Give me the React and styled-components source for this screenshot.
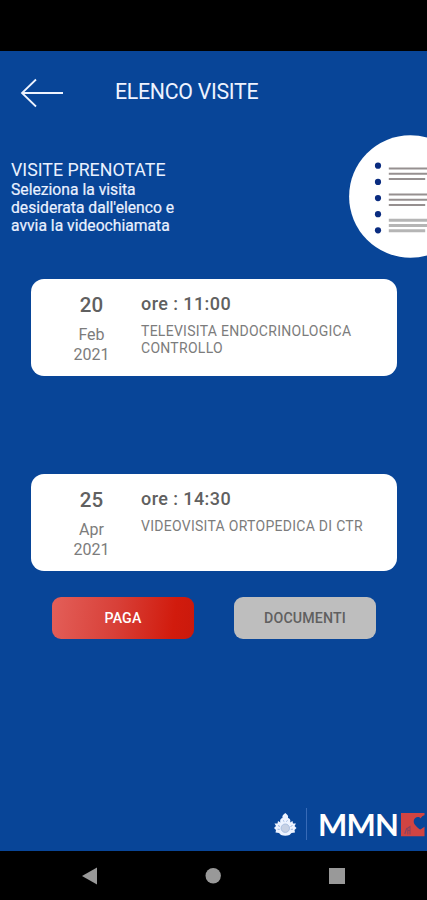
import React from "react";
import styled, { createGlobalStyle } from "styled-components";

const GlobalStyle = createGlobalStyle`
  * { box-sizing: border-box; }
  body { margin: 0; background: #000; font-family: Roboto, "Liberation Sans", sans-serif; }
  h1, h2, p { margin: 0; font-weight: 400; }
  button { font-family: inherit; border: 0; padding: 0; }
  svg { display: block; flex: none; }
`;

const Screen = styled.div`
  width: 427px;
  height: 900px;
  display: flex;
  flex-direction: column;
  overflow: hidden;
  background: #000;
`;

const StatusBar = styled.div`
  height: 51px;
  flex: none;
`;

const Content = styled.main`
  height: 800px;
  flex: none;
  display: flex;
  flex-direction: column;
  background: #084598;
  overflow: hidden;
`;

const Header = styled.header`
  height: 80px;
  flex: none;
  display: flex;
  align-items: center;
  padding-left: 20px;
`;

const BackButton = styled.button`
  width: 44px;
  height: 32px;
  margin: 4px 51px 0 0;
  background: none;
`;

const Title = styled.h1`
  padding-top: 1px;
  font-size: 21.3px;
  line-height: 26px;
  letter-spacing: -0.28px;
  color: #eef3ff;
`;

const Intro = styled.section`
  height: 148px;
  flex: none;
  display: flex;
  justify-content: space-between;
  padding: 4px 0 0 11px;
`;

const IntroText = styled.div`
  padding-top: 25px;
  color: #eaf1ff;
`;

const IntroTitle = styled.h2`
  font-size: 17.8px;
  line-height: 20.6px;
  white-space: nowrap;
`;

const IntroLine = styled.p`
  font-size: 15.7px;
  line-height: 18.3px;
  white-space: nowrap;
  -webkit-text-stroke: 0.2px #eaf1ff;
`;

const VisitCard = styled.article`
  width: 366px;
  height: 97px;
  flex: none;
  display: flex;
  margin: 0 0 ${(p) => p.$gap}px 31px;
  background: #fff;
  border-radius: 13px;
  color: #7c7c7c;
`;

const DateColumn = styled.div`
  width: 121px;
  padding-top: 13px;
  text-align: center;
`;

const Day = styled.p`
  font-size: 20.5px;
  font-weight: 500;
  line-height: 26px;
  color: #606060;
`;

const DatePart = styled.p`
  font-size: 16px;
  line-height: 19.5px;
  margin-top: ${(p) => p.$top || 0}px;
`;

const Details = styled.div`
  padding-top: 13px;
  margin-left: -11px;
`;

const Time = styled.p`
  font-size: 18px;
  font-weight: 500;
  line-height: 24px;
  letter-spacing: 0.42px;
  color: #606060;
`;

const VisitName = styled.p`
  margin-top: 7px;
  font-size: 14px;
  line-height: 17px;
  letter-spacing: 0.28px;
  white-space: nowrap;
`;

const Actions = styled.div`
  display: flex;
  gap: 40px;
  padding-left: 52px;
  flex: none;
`;

const ActionButton = styled.button`
  width: 142px;
  height: 42px;
  border-radius: 9px;
  font-size: 14.2px;
  font-weight: 500;
  line-height: 42px;
  letter-spacing: 0.15px;
  color: ${(p) => (p.$primary ? "#fff" : "#606060")};
  background: ${(p) => (p.$primary ? "linear-gradient(97deg, #e35f59 0%, #d84038 45%, #d11b0d 85%, #ca190c 100%)" : "#bebebe")};
`;

const Branding = styled.footer`
  margin-top: auto;
  height: 52px;
  flex: none;
  display: flex;
  align-items: flex-start;
  padding-left: 273px;
`;

const LogoSlot = styled.div`
  padding-top: 14px;
`;

const Divider = styled.div`
  width: 1px;
  height: 32px;
  margin: 9px 11px 0 9px;
  background: #376ab7;
`;

const Wordmark = styled.div`
  width: 82px;
  padding-top: 7px;
  font: 700 31px/36px Lato, "Open Sans", sans-serif;
  letter-spacing: -0.8px;
  color: #fff;
`;

const NavBar = styled.nav`
  flex: 1;
  display: flex;
  align-items: center;
  justify-content: space-between;
  padding: 0 82px;
`;

const BackArrow = () => (
  <svg width="44" height="32" viewBox="0 0 44 32" fill="none" stroke="#eef3ff" strokeWidth="1.8">
    <path d="M43 16H2M16 2.5 2 16l14 13.5" />
  </svg>
);

const LINES = [
  { y: 33, color: "#969090", w: 2 },
  { y: 59, color: "#969090", w: 2 },
  { y: 84.7, color: "#b5b5b5", w: 3 },
];

const ListIllustration = () => (
  <svg width="79" height="124" viewBox="0 0 79 124">
    <circle cx="62.3" cy="61.5" r="61.2" fill="#fff" />
    {[30.7, 46.9, 63.1, 79.2, 95.3].map((y) => (
      <circle key={y} cx="30" cy={y} r="3.1" fill="#0a2c80" />
    ))}
    {LINES.map(({ y, color, w }) => (
      <path key={y} d={`M40.8 ${y + 0.6}h39M40.8 ${y + 5.8}h39M40.8 ${y + 11}h36.4`} stroke={color} strokeWidth={w} />
    ))}
  </svg>
);

const Emblem = () => (
  <svg width="24" height="24" viewBox="0 0 24 24">
    <path
      fill="#edf3ff"
      d="M12.3 0C14.5 1.5 15.6 3 15 5C17.5 5.5 17.8 8 17 9.5L19.5 8L20 10.5L23 10.5L21.5 13L23.5 15L21.5 17L22 19.5L18.5 20L16.5 22C14 23 10.5 23 8 22L6 20L2.5 19.5L3 17L1 15L3 13L1.5 10.5L4.5 10.5L5 8L7.5 9.5C6.8 8 7 5.5 9.5 5C9 3 10 1.5 12.3 0Z"
    />
    <path d="M5 12.5l2 1M19.5 12.5l-2 1M4.5 16.2l2.2.2M20 16.2l-2.2.2M10 7.5l1.3 1M14.6 7.5l-1.3 1" stroke="#8eaddd" strokeWidth="0.9" />
    <circle cx="12.3" cy="15.2" r="4.2" fill="#c7d1e4" stroke="#aabfe0" />
  </svg>
);

const BrandTile = () => (
  <svg width="25" height="24" viewBox="0 0 25 24">
    <path
      fill="#d04442"
      d="M1 0H24.5V2.5C22.8 2.7 21.5 4 20.8 5.5C18.5 3 14.6 4 13.8 7.5C13.3 10.5 15.3 12.8 20 16.5C21.5 15.8 23 14.5 24.5 13V23.2H1Z"
    />
    <path fill="#084598" d="M20.8 5.5C21.5 4 22.8 2.7 25 2.5V13.5L20 16.5Z" />
    <path d="M4.8 21l2-6M7.8 21.5V15l2.2-1.5v8M7.8 17.5h2.2" stroke="#874360" strokeWidth="1.1" fill="none" />
  </svg>
);

const visits = [
  { day: "20", month: "Feb", year: "2021", time: "11:00", name: ["TELEVISITA ENDOCRINOLOGICA", "CONTROLLO"], gap: 98 },
  { day: "25", month: "Apr", year: "2021", time: "14:30", name: ["VIDEOVISITA ORTOPEDICA DI CTR"], gap: 26 },
];

const Visit = ({ day, month, year, time, name, gap }) => (
  <VisitCard $gap={gap}>
    <DateColumn>
      <Day>{day}</Day>
      <DatePart $top={7}>{month}</DatePart>
      <DatePart>{year}</DatePart>
    </DateColumn>
    <Details>
      <Time>ore : {time}</Time>
      <VisitName>
        {name.map((line) => (
          <React.Fragment key={line}>
            {line}
            <br />
          </React.Fragment>
        ))}
      </VisitName>
    </Details>
  </VisitCard>
);

export default function App() {
  return (
    <Screen>
      <GlobalStyle />
      <StatusBar />
      <Content>
        <Header>
          <BackButton aria-label="Indietro">
            <BackArrow />
          </BackButton>
          <Title>ELENCO VISITE</Title>
        </Header>
        <Intro>
          <IntroText>
            <IntroTitle>VISITE PRENOTATE</IntroTitle>
            <IntroLine>Seleziona la visita</IntroLine>
            <IntroLine>desiderata dall'elenco e</IntroLine>
            <IntroLine>avvia la videochiamata</IntroLine>
          </IntroText>
          <ListIllustration />
        </Intro>
        {visits.map((visit) => (
          <Visit key={visit.day} {...visit} />
        ))}
        <Actions>
          <ActionButton $primary>PAGA</ActionButton>
          <ActionButton>DOCUMENTI</ActionButton>
        </Actions>
        <Branding>
          <LogoSlot>
            <Emblem />
          </LogoSlot>
          <Divider />
          <Wordmark>MMN</Wordmark>
          <LogoSlot>
            <BrandTile />
          </LogoSlot>
        </Branding>
      </Content>
      <NavBar>
        <svg width="15" height="18" viewBox="0 0 15 18">
          <path d="M15 0.5V17.5L0 9z" fill="#999" />
        </svg>
        <svg width="16" height="16" viewBox="0 0 16 16">
          <circle cx="8.2" cy="7.8" r="7.7" fill="#999" />
        </svg>
        <svg width="16" height="16" viewBox="0 0 16 16">
          <rect width="16" height="16" fill="#999" />
        </svg>
      </NavBar>
    </Screen>
  );
}
